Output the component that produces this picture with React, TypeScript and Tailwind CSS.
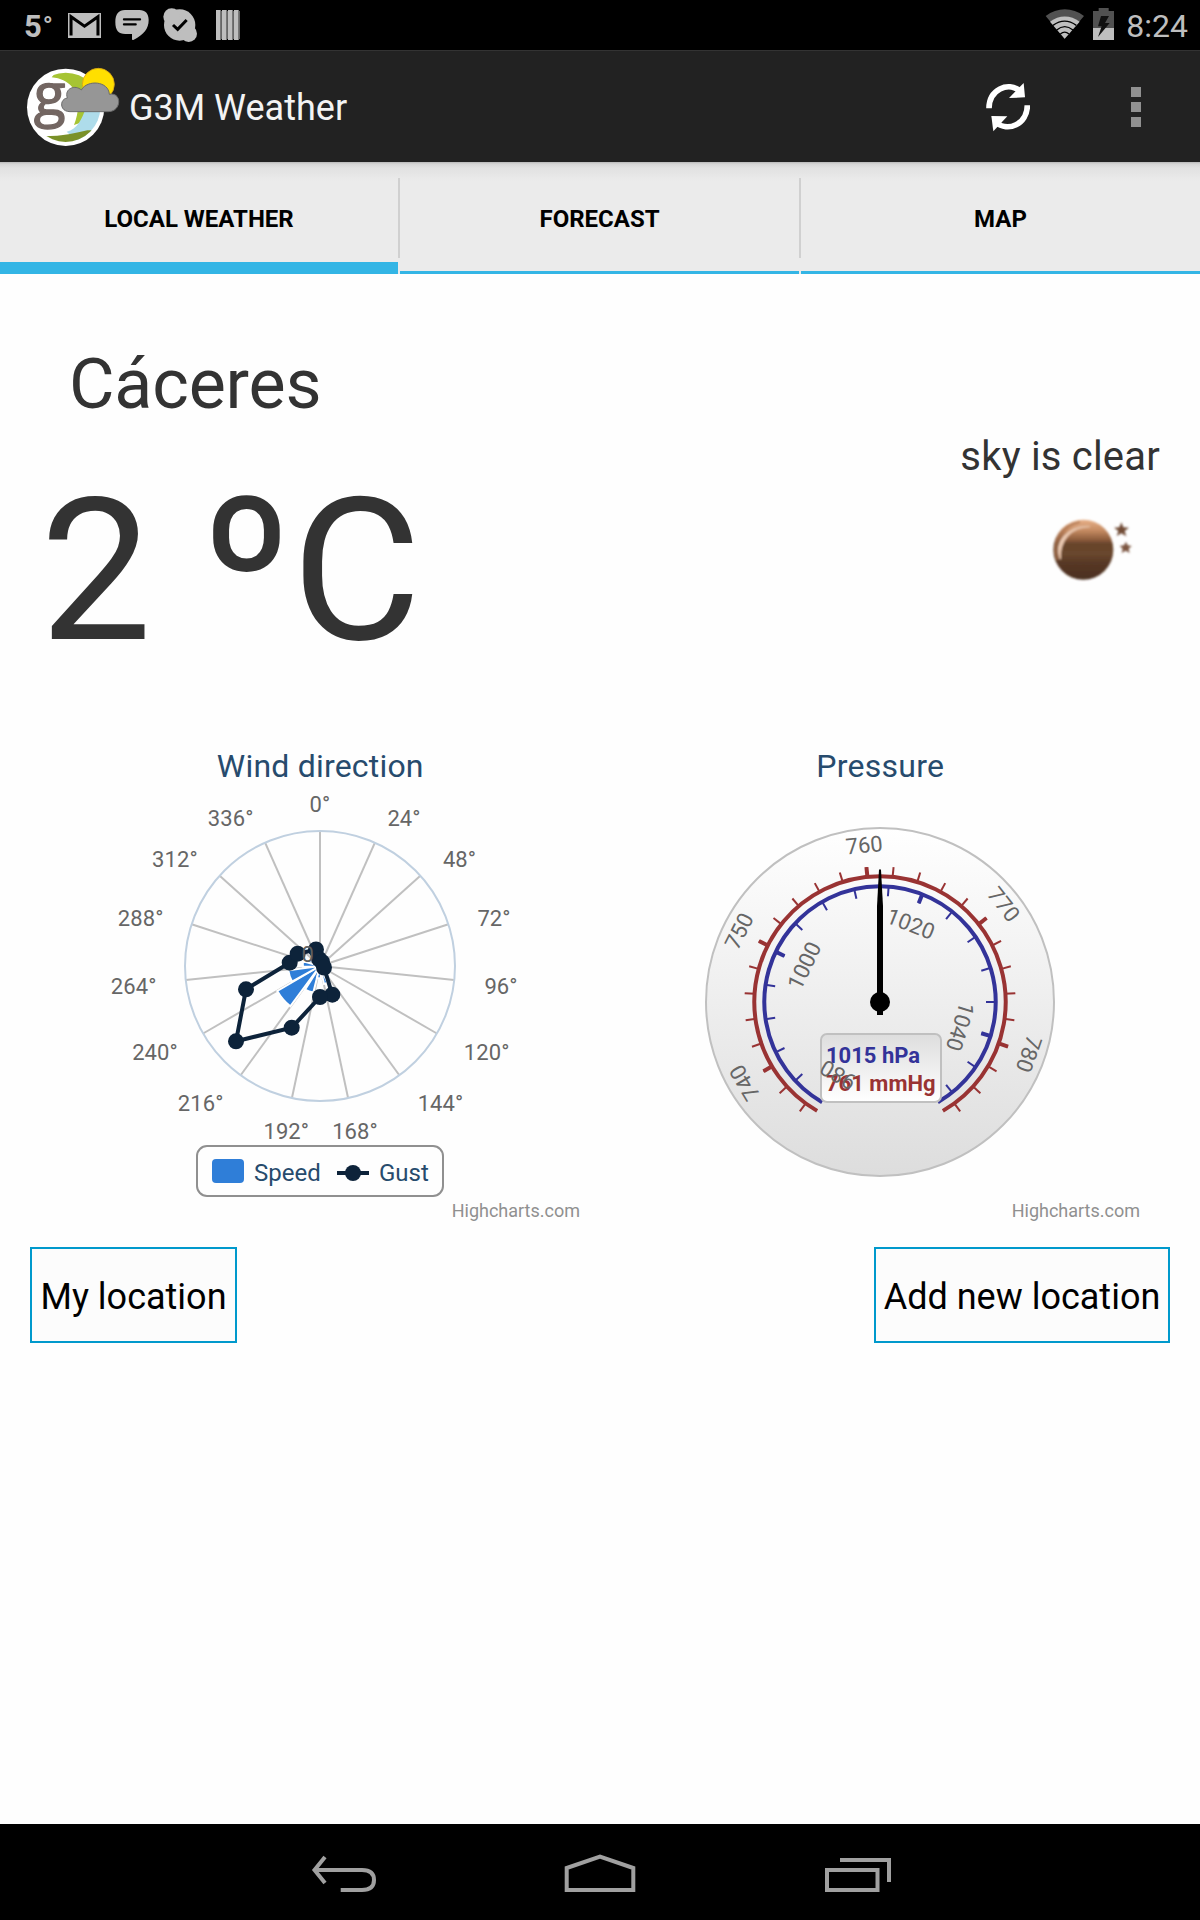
import React from "react";

const RAD = Math.PI / 180;

function polar(cx: number, cy: number, r: number, deg: number): [number, number] {
  return [cx + r * Math.sin(deg * RAD), cy - r * Math.cos(deg * RAD)];
}

function StatusBar() {
  return (
    <div className="flex h-[50px] items-start justify-between bg-black text-[#bebebe]">
      <div className="flex items-start pl-[24px]">
        <div className="flex w-[44px] pt-[9px] text-[31px] font-bold leading-[36px]">
          5<span className="-mt-px ml-px text-[26px] leading-[36px] font-bold">°</span>
        </div>
        <svg className="mt-[13px] h-[25px] w-[33px]" viewBox="204 39 98 74">
          <path d="M204 39H302V113H204Z" fill="#bebebe" />
          <path d="M213 106V50L253 78L293 50V106" fill="none" stroke="#000" strokeWidth="9" />
        </svg>
        <svg className="ml-[14px] mt-[10px] h-[30px] w-[34px]" viewBox="345 30 102 90">
          <path
            d="M375 30H418C436 30 446 41 446 60C446 86 432 104 400 120L396 119V102H376C356 102 346 92 346 66C346 42 356 30 375 30Z"
            fill="#bebebe"
          />
          <path d="M372 58H420M372 73H407" stroke="#000" strokeWidth="7" strokeLinecap="round" />
        </svg>
        <svg className="ml-[14px] mt-[8px] h-[34px] w-[34px]" viewBox="489 24 102 102">
          <circle cx="539" cy="75" r="47" fill="#bebebe" />
          <circle cx="515" cy="50" r="25" fill="#bebebe" />
          <circle cx="566" cy="101" r="25" fill="#bebebe" />
          <path d="M519 75L533 88L560 60" fill="none" stroke="#000" strokeWidth="9" />
        </svg>
        <svg className="ml-[19px] mt-[10px] h-[30px] w-[24px]" viewBox="648 30 72 90">
          {[0, 1, 2, 3].map((i) => (
            <g key={i}>
              <rect x={648 + i * 18} y={30} width={14} height={90} fill="#bebebe" />
              <rect x={662 + i * 18} y={33} width={4} height={84} fill="#666" />
            </g>
          ))}
        </svg>
      </div>
      <div className="flex items-start pr-[12px]">
        <svg className="mt-[9px] h-[30px] w-[40px]" viewBox="315 28 120 90">
          <path d="M374 117L317 49C352 22 397 22 432 49Z" fill="#515151" />
          <path d="M374 117L330 66C357 45 392 45 419 66Z" fill="#bebebe" />
          <path d="M339 77Q374 52 409 77M350 91Q374 71 399 91M361 103Q374 92 387 103" fill="none" stroke="#000" strokeWidth="4" />
        </svg>
        <svg className="ml-[8px] mt-[8px] h-[32px] w-[21px]" viewBox="459 24 63 96">
          <path d="M459 33H476V24H506V33H522V120H459Z" fill="#515151" />
          <path d="M459 84H522V120H459Z" fill="#bebebe" />
          <path d="M483 48H507L495 69H509L474 111L485 79H474Z" fill="#111" />
        </svg>
        <div className="ml-[12px] pt-[8px] text-[32px] leading-[36px]">8:24</div>
      </div>
    </div>
  );
}

function Logo() {
  return (
    <svg className="h-[81px] w-[95px] overflow-visible" viewBox="75 195 285 243">
      <clipPath id="disc">
        <circle cx="197" cy="319" r="104" />
      </clipPath>
      <circle cx="197" cy="319" r="116" fill="#fff" />
      <g clipPath="url(#disc)">
        <path d="M155 229C230 236 250 300 222 372L285 350L300 200H180Z" fill="#a6c434" />
        <path d="M200 392C232 385 246 352 258 320H320V420H230Z" fill="#aedceb" />
        <path d="M130 406C190 406 228 396 262 388H320V440H140Z" fill="#7a9128" />
      </g>
      <text
        x="101"
        y="341"
        fontSize="176"
        fontWeight="400"
        fill="#736662"
        stroke="#736662"
        strokeWidth="4"
        strokeLinejoin="round"
        fontFamily="'Open Sans', sans-serif"
      >
        g
      </text>
      <circle cx="295" cy="250" r="48" fill="#ffdf00" stroke="#d9a516" strokeWidth="2.5" />
      <path
        d="M210 332C178 332 178 294 202 291C192 262 226 250 244 267C262 235 326 240 328 280C366 272 366 332 325 332Z"
        fill="#969696"
        stroke="#6c6c6c"
        strokeWidth="3"
      />
    </svg>
  );
}

function ActionBar() {
  return (
    <header className="flex h-[112px] items-center border-t border-[#333] bg-[#222]">
      <div className="ml-[25px]">
        <Logo />
      </div>
      <h1 className="ml-[9px] pt-[3px] text-[36px] leading-none text-[#f3f3f3]">G3M Weather</h1>
      <svg className="ml-auto mr-[101px] h-[50px] w-[44px]" viewBox="138 245 132 150">
        <path d="M147 324C147 268 204 242 240 272" fill="none" stroke="#fff" strokeWidth="17" />
        <path d="M262 315C262 372 203 396 168 366" fill="none" stroke="#fff" strokeWidth="17" />
        <path d="M251 248L255 291L207 293Z" fill="#fff" />
        <path d="M154 347L202 348L160 393Z" fill="#fff" />
      </svg>
      <div className="mr-[59px] flex flex-col gap-[5px]">
        <div className="size-[10px] bg-[#919191]" />
        <div className="size-[10px] bg-[#919191]" />
        <div className="size-[10px] bg-[#919191]" />
      </div>
    </header>
  );
}

function Tab({ label, active }: { label: string; active?: boolean }) {
  return (
    <div
      className={
        active
          ? "flex w-[398px] items-center justify-center border-b-[12px] border-[#33b5e5] pt-[13px]"
          : "flex w-[399px] items-center justify-center border-b-[3px] border-[#33b5e5] pt-[4px]"
      }
    >
      <span className="text-[24px] font-bold leading-none text-black">{label}</span>
    </div>
  );
}

function Tabs() {
  return (
    <nav className="flex h-[112px] bg-[linear-gradient(#b8b8b8_0px,#d6d6d6_2px,#e2e2e2_6px,#e5e5e5_11px,#eaeaea_17px,#ebebeb_20px)]">
      <Tab label="LOCAL WEATHER" active />
      <div className="mt-[16px] h-[80px] w-[2px] bg-[#d0d0d0]" />
      <Tab label="FORECAST" />
      <div className="mt-[16px] h-[80px] w-[2px] bg-[#d0d0d0]" />
      <Tab label="MAP" />
    </nav>
  );
}

function Moon() {
  return (
    <svg className="h-[70px] w-[90px]" viewBox="384 315 270 210">
      <defs>
        <linearGradient id="moon" x1="0" y1="0" x2="0" y2="1">
          <stop offset="0" stopColor="#e8b189" />
          <stop offset="0.18" stopColor="#c58b62" />
          <stop offset="0.34" stopColor="#8a5a3a" />
          <stop offset="0.4" stopColor="#68452c" />
          <stop offset="0.58" stopColor="#69462d" />
          <stop offset="0.72" stopColor="#573825" />
          <stop offset="1" stopColor="#4b2f20" />
        </linearGradient>
        <filter id="soft">
          <feGaussianBlur stdDeviation="2.5" />
        </filter>
      </defs>
      <g filter="url(#soft)">
        <circle cx="490" cy="419" r="90" fill="url(#moon)" />
        <path d="M421 448C400 395 445 345 510 350C450 352 418 392 421 448Z" fill="#f0d3be" stroke="#e3bda2" strokeWidth="4" />
        <path d="M412 450C394 395 425 345 480 336" fill="none" stroke="#ab7350" strokeWidth="5" />
        <path d="M604 337L610 352L627 353L614 363L619 379L604 370L590 378L595 363L582 353L598 352Z" fill="#714b36" />
        <path d="M618 395L623 406L635 408L626 416L629 429L617 422L605 429L608 416L599 408L612 406Z" fill="#7c5540" />
      </g>
    </svg>
  );
}

const windLabels: [string, number, number][] = [
  ["0°", 320, 811.7],
  ["24°", 404, 826],
  ["48°", 459.5, 867],
  ["72°", 494, 926],
  ["96°", 501, 994],
  ["120°", 486.7, 1060],
  ["144°", 440.5, 1111],
  ["168°", 355, 1139.3],
  ["192°", 286.3, 1139.3],
  ["216°", 200.7, 1111],
  ["240°", 155, 1060],
  ["264°", 133.7, 994],
  ["288°", 140.7, 926],
  ["312°", 174.9, 867],
  ["336°", 230.7, 826],
];

const gust: [number, number][] = [
  [316, 949.5],
  [319, 959],
  [322, 962],
  [324, 967.5],
  [332.3, 994.7],
  [320, 997],
  [291.7, 1027.7],
  [236, 1041.3],
  [246, 989.3],
  [289.7, 962.7],
  [297.7, 953.7],
];

function WindChart() {
  return (
    <svg className="h-[510px] w-[600px]" viewBox="0 730 600 510" fontFamily="Roboto, sans-serif">
      <text x="320.3" y="776.5" textAnchor="middle" fontSize="32" letterSpacing="0.2" fill="#274b6d">
        Wind direction
      </text>
      {windLabels.map((_, i) => {
        const [x, y] = polar(320, 966, 135, i * 24);
        return <line key={i} x1="320" y1="966" x2={x} y2={y} stroke="#c0c0c0" strokeWidth="2" />;
      })}
      <circle cx="320" cy="966" r="135" fill="none" stroke="#c0d0e0" strokeWidth="2" />
      <g fill="#2f7ed8" stroke="#fff" strokeWidth="2">
        <path d="M320 966L277.3 991A50 50 0 0 0 290.3 1006.3Z" />
        <path d="M320 966L288.3 970.3A32 32 0 0 0 292 981.5Z" />
        <path d="M320 966L303 961.3A17 17 0 0 0 303 966.7Z" />
        <path d="M320 966L305 989.6A27 27 0 0 0 313.3 992.5Z" />
        <path d="M320 966L317 978A12 12 0 0 0 321 978Z" />
        <path d="M320 966L324 984A17 17 0 0 0 327.5 982.5Z" />
      </g>
      <polygon points={gust.map((p) => p.join(",")).join(" ")} fill="none" stroke="#0d233a" strokeWidth="4" />
      {gust.map(([x, y], i) => (
        <circle key={i} cx={x} cy={y} r="8" fill="#0d233a" />
      ))}
      <text x="307.7" y="961.5" textAnchor="middle" fontSize="22" fill="#606060">
        0
      </text>
      <g fill="#666" fontSize="22" textAnchor="middle" letterSpacing="0.1">
        {windLabels.map(([t, x, y]) => (
          <text key={t} x={x} y={y}>
            {t}
          </text>
        ))}
      </g>
      <rect x="197" y="1146" width="246" height="50" rx="10" fill="none" stroke="#909090" strokeWidth="2" />
      <rect x="212" y="1159" width="32" height="24" rx="4" fill="#2f7ed8" />
      <text x="254" y="1180.7" fontSize="24" fill="#274b6d">
        Speed
      </text>
      <path d="M337 1173H369" stroke="#0d233a" strokeWidth="4" />
      <circle cx="353" cy="1173" r="8" fill="#0d233a" />
      <text x="379" y="1180.7" fontSize="24" fill="#274b6d">
        Gust
      </text>
      <text x="580" y="1216.7" fontSize="18" textAnchor="end" fill="#909090">
        Highcharts.com
      </text>
    </svg>
  );
}

const hpaAngle = (v: number) => -150 + ((v - 980) * 300) / 70;
const mmAngle = (v: number) => -5.75 + (v - 760) * 5.75;

function Tick({ angle, from, to, color, width }: { angle: number; from: number; to: number; color: string; width: number }) {
  const [x1, y1] = polar(880, 1002, from, angle);
  const [x2, y2] = polar(880, 1002, to, angle);
  return <line x1={x1} y1={y1} x2={x2} y2={y2} stroke={color} strokeWidth={width} />;
}

function Arc({ r, color }: { r: number; color: string }) {
  const a = polar(880, 1002, r, -150);
  const b = polar(880, 1002, r, 150);
  return <path d={`M${a[0]} ${a[1]}A${r} ${r} 0 1 1 ${b[0]} ${b[1]}`} fill="none" stroke={color} strokeWidth="4" />;
}

function DialLabel({ value, angle, r }: { value: number; angle: number; r: number }) {
  return (
    <text x="880" y={1002 - r} transform={`rotate(${angle} 880 1002)`} textAnchor="middle" fontSize="22" fill="#666">
      {value}
    </text>
  );
}

function PressureGauge() {
  const hpaMinor = Array.from({ length: 17 }, (_, i) => 984 + i * 4);
  const mmMinor = Array.from({ length: 26 }, (_, i) => 736 + i * 2);
  return (
    <svg className="h-[510px] w-[600px]" viewBox="600 730 600 510" fontFamily="Roboto, sans-serif">
      <defs>
        <linearGradient id="dial" x1="0" y1="0" x2="0" y2="1">
          <stop offset="0" stopColor="#fff" />
          <stop offset="1" stopColor="#ddd" />
        </linearGradient>
        <linearGradient id="readout" x1="0" y1="0" x2="0" y2="1">
          <stop offset="0" stopColor="#ddd" />
          <stop offset="1" stopColor="#fff" />
        </linearGradient>
      </defs>
      <text x="880.3" y="776.5" textAnchor="middle" fontSize="32" letterSpacing="0.25" fill="#274b6d">
        Pressure
      </text>
      <circle cx="880" cy="1002" r="174" fill="url(#dial)" stroke="#c0c0c0" strokeWidth="2" />
      <Arc r={125.7} color="#993333" />
      <Arc r={115.7} color="#333399" />
      {mmMinor.map((v) => (
        <Tick key={v} angle={mmAngle(v)} from={125} to={135.6} color="#993333" width={2} />
      ))}
      {[740, 750, 760, 770, 780].map((v) => (
        <Tick key={v} angle={mmAngle(v)} from={125} to={135.6} color="#993333" width={4} />
      ))}
      {hpaMinor.map((v) => (
        <Tick key={v} angle={hpaAngle(v)} from={116} to={106} color="#333399" width={2} />
      ))}
      {[1000, 1020, 1040].map((v) => (
        <Tick key={v} angle={hpaAngle(v)} from={116} to={106} color="#333399" width={4} />
      ))}
      <rect x="821" y="1034" width="120" height="68" rx="6" fill="url(#readout)" stroke="#c0c0c0" strokeWidth="2" />
      <text x="826" y="1062.7" fontSize="22" fontWeight="700" fill="#333399">
        1015 hPa
      </text>
      <text x="826" y="1091" fontSize="22" fontWeight="700" fill="#993333">
        761 mmHg
      </text>
      {[740, 750, 760, 770, 780].map((v) => (
        <DialLabel key={v} value={v} angle={mmAngle(v)} r={150} />
      ))}
      {[980, 1000, 1020, 1040].map((v) => (
        <DialLabel key={v} value={v} angle={hpaAngle(v)} r={76.3} />
      ))}
      <path d="M879 869.5H881L883 906.5V1015H877V906.5Z" fill="#000" />
      <circle cx="880" cy="1002" r="10" fill="#000" />
      <text x="1140" y="1216.7" fontSize="18" textAnchor="end" fill="#909090">
        Highcharts.com
      </text>
    </svg>
  );
}

function LocationButton({ label, width }: { label: string; width: string }) {
  return (
    <button
      className={`flex h-[96px] items-center justify-center whitespace-nowrap border-2 border-[#0099cc] bg-[#fcfcfc] pt-[3px] text-[36px] leading-none text-black ${width}`}
    >
      {label}
    </button>
  );
}

function NavBar() {
  return (
    <footer className="flex h-[96px] items-start bg-black pt-[28px]">
      <svg className="ml-[308px] h-[44px] w-[72px]" viewBox="308 1852 72 44" fill="none" stroke="#a0a0a0" strokeWidth="4">
        <path d="M314 1870H362Q374 1870 374 1880Q374 1890 362 1890H340.7" />
        <path d="M325 1857L314.500 1870L325 1883" />
      </svg>
      <svg className="ml-[180px] h-[44px] w-[80px]" viewBox="560 1852 80 44" fill="none" stroke="#a0a0a0" strokeWidth="4">
        <path d="M566.700 1890V1868L600 1856.500L633.300 1868V1890Z" />
      </svg>
      <svg className="ml-[180px] h-[44px] w-[76px]" viewBox="820 1852 76 44" fill="none" stroke="#a0a0a0" strokeWidth="4">
        <path d="M827 1870H877.500V1890H827Z" />
        <path d="M840 1860H889V1882" />
      </svg>
    </footer>
  );
}

export default function App() {
  return (
    <div className="flex h-[1920px] w-[1200px] flex-col overflow-hidden bg-white font-['Roboto',sans-serif]">
      <StatusBar />
      <ActionBar />
      <Tabs />
      <main className="flex flex-1 flex-col bg-[#fefefe]">
        <section className="flex h-[456px] justify-between text-[#333]">
          <div className="pt-[70px]">
            <h2 className="pl-[69px] text-[70px] leading-[80px] tracking-[-0.2px]">Cáceres</h2>
            <div className="pl-[40px] pt-[27px] text-[199px] leading-[240px]">2 ºC</div>
          </div>
          <div className="flex flex-col items-end pr-[40px] pt-[159px]">
            <div className="text-[40px] leading-[48px] tracking-[0.2px]">sky is clear</div>
            <div className="mr-[22px] mt-[34px]">
              <Moon />
            </div>
          </div>
        </section>
        <section className="flex">
          <WindChart />
          <PressureGauge />
        </section>
        <div className="mt-[7px] flex justify-between px-[30px]">
          <LocationButton label="My location" width="w-[207px]" />
          <LocationButton label="Add new location" width="w-[296px]" />
        </div>
      </main>
      <NavBar />
    </div>
  );
}
